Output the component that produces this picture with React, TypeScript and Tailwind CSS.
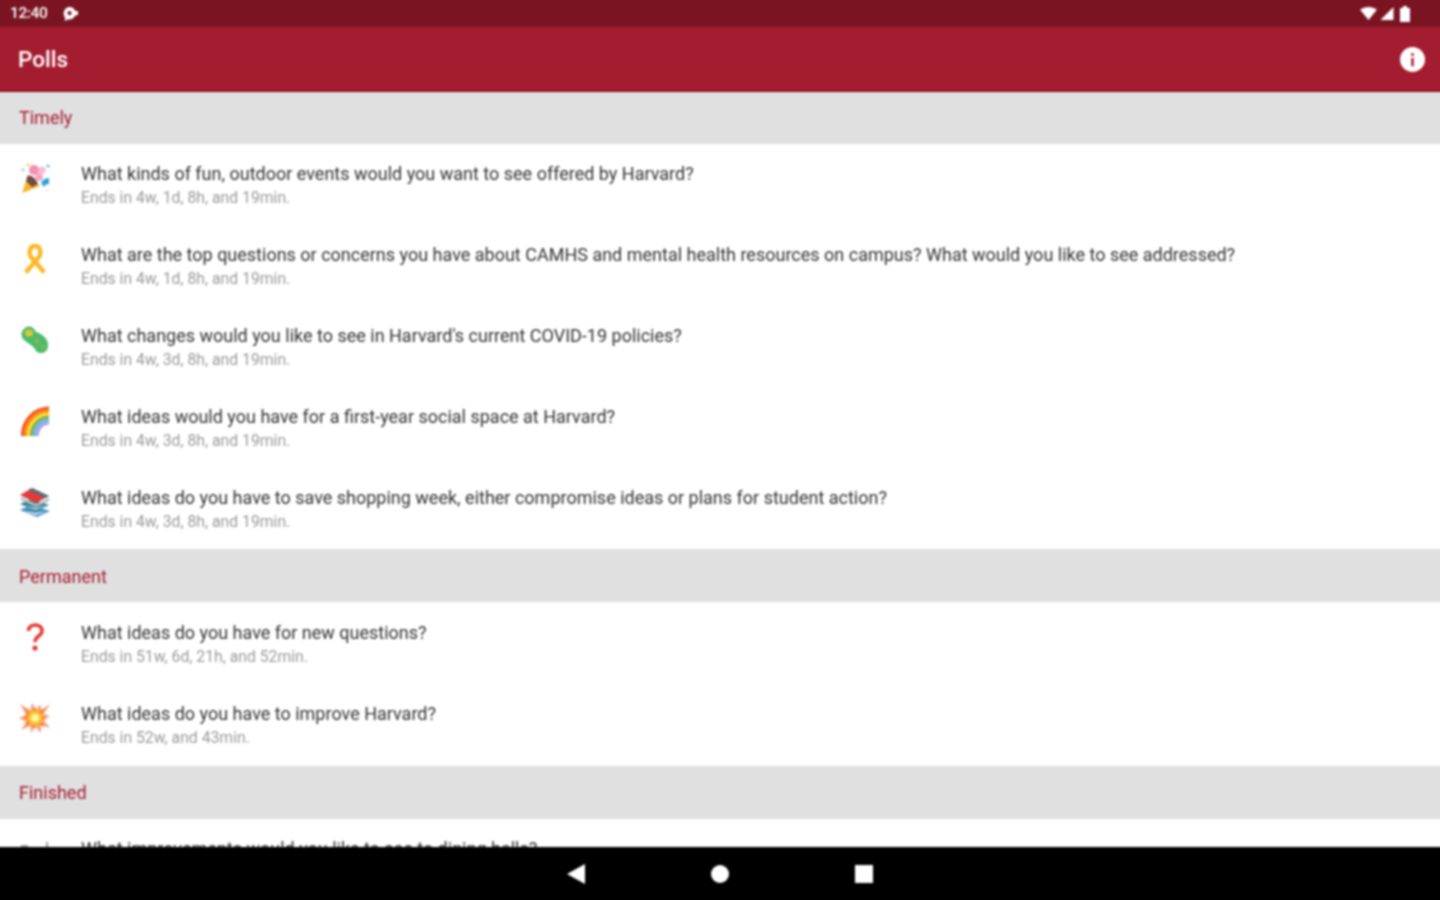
const polls = {
  timely: [
    { icon: "party", title: "What kinds of fun, outdoor events would you want to see offered by Harvard?", ends: "Ends in 4w, 1d, 8h, and 19min." },
    { icon: "ribbon", title: "What are the top questions or concerns you have about CAMHS and mental health resources on campus? What would you like to see addressed?", ends: "Ends in 4w, 1d, 8h, and 19min." },
    { icon: "microbe", title: "What changes would you like to see in Harvard's current COVID-19 policies?", ends: "Ends in 4w, 3d, 8h, and 19min." },
    { icon: "rainbow", title: "What ideas would you have for a first-year social space at Harvard?", ends: "Ends in 4w, 3d, 8h, and 19min." },
    { icon: "books", title: "What ideas do you have to save shopping week, either compromise ideas or plans for student action?", ends: "Ends in 4w, 3d, 8h, and 19min." },
  ],
  permanent: [
    { icon: "question", title: "What ideas do you have for new questions?", ends: "Ends in 51w, 6d, 21h, and 52min." },
    { icon: "boom", title: "What ideas do you have to improve Harvard?", ends: "Ends in 52w, and 43min." },
  ],
};

function PollIcon({ name }: { name: string }) {
  if (name === "party") {
    return (
      <svg viewBox="0 0 32 32" className="h-8 w-8">
        <path d="M3 31 L9 13 L21 24 Z" fill="#fbb02d" />
        <path d="M8.5 14 C12 12 17 17 19 22 L13 25 L7 19 Z" fill="#6d4c41" />
        <circle cx="15" cy="8" r="5" fill="#f48fb1" />
        <circle cx="23" cy="8" r="3.5" fill="#f8bbd0" />
        <circle cx="20" cy="15" r="4" fill="#f8a5c2" />
        <path d="M22 21 q3 -5 8 -5 l0 6 q-4 0 -5 3 Z" fill="#29a3e0" />
        <circle cx="4" cy="8" r="2" fill="#b3e5fc" />
        <circle cx="9" cy="3" r="1.5" fill="#fdd835" />
        <circle cx="29" cy="4" r="1.6" fill="#4fc3f7" />
        <circle cx="28" cy="28" r="1.5" fill="#fce4ec" />
      </svg>
    );
  }
  if (name === "ribbon") {
    return (
      <svg viewBox="0 0 32 32" className="h-8 w-8">
        <path d="M8 28 L20 14 C23 9 21 3 16 3 C11 3 9 9 12 14 L24 28" fill="none" stroke="#fbb829" strokeWidth="4.4" strokeLinecap="round" />
      </svg>
    );
  }
  if (name === "microbe") {
    return (
      <svg viewBox="0 0 32 32" className="h-8 w-8">
        <path d="M6 4 C10 1 15 3 17 8 C22 9 30 15 29 22 C29 29 21 31 17 27 C15 22 10 20 5 16 C1 12 2 7 6 4 Z" fill="#4cbb6c" />
        <ellipse cx="10" cy="9" rx="4" ry="3.5" fill="#e0c53a" />
        <circle cx="18" cy="17" r="3" fill="#7cb85a" />
        <circle cx="24" cy="23" r="2.6" fill="#7cb85a" />
      </svg>
    );
  }
  if (name === "rainbow") {
    return (
      <svg viewBox="0 0 32 32" className="h-8 w-8">
        <g fill="none" strokeWidth="3">
          <path d="M3.5 31 A 27 27 0 0 1 30 3" stroke="#f4511e" />
          <path d="M6.5 31 A 24 24 0 0 1 30 6" stroke="#fb8c00" />
          <path d="M9.5 31 A 21 21 0 0 1 30 9" stroke="#fdd835" />
          <path d="M12.5 31 A 18 18 0 0 1 30 12" stroke="#7cb342" />
          <path d="M15.5 31 A 15 15 0 0 1 30 15" stroke="#64b5f6" />
          <path d="M18.5 31 A 12 12 0 0 1 30 18" stroke="#b39ddb" />
        </g>
      </svg>
    );
  }
  if (name === "books") {
    return (
      <svg viewBox="0 0 32 32" className="h-8 w-8">
        <path d="M1 24 L12 19 L31 25 L18 31 Z" fill="#3f8fc4" />
        <path d="M3 25 L17 29 L28 25 L17 27 Z" fill="#eceff1" />
        <path d="M1 18 L13 13 L30 19 L17 25 Z" fill="#2e7d8c" />
        <path d="M3 19 L17 24 L28 19 L17 22 Z" fill="#cfd8dc" />
        <path d="M2 11 L17 18 L30 12 L30 15 L17 21 L2 14 Z" fill="#b0bec5" />
        <path d="M1 9 L13 2 L30 10 L17 17 Z" fill="#e53935" />
        <path d="M9 4 L13 2 L30 10 L26 12 Z" fill="#546e7a" />
      </svg>
    );
  }
  if (name === "question") {
    return (
      <svg viewBox="0 0 32 32" className="h-8 w-8">
        <path d="M9.5 10 C9.5 2 23 2 23 10 C23 15 16 15 16 21" fill="none" stroke="#e53935" strokeWidth="3.6" />
        <circle cx="16" cy="27" r="2.6" fill="#e53935" />
      </svg>
    );
  }
  if (name === "boom") {
    return (
      <svg viewBox="0 0 32 32" className="h-8 w-8">
        <path d="M1 2 L11 8 L13 1 L17 7 L22 2 L22 8 L31 2 L25 12 L31 14 L25 18 L31 26 L22 23 L22 31 L16 25 L12 31 L11 24 L2 28 L7 20 L0 16 L7 13 Z" fill="#f8a58a" />
        <path d="M5 6 L12 11 L16 5 L18 10 L26 6 L22 13 L27 16 L22 19 L26 25 L18 22 L15 27 L12 22 L6 24 L9 18 L4 15 L9 12 Z" fill="#f9812a" />
        <circle cx="16" cy="16" r="7.5" fill="#fbc02d" />
        <circle cx="16" cy="16" r="4" fill="#fff59d" />
      </svg>
    );
  }
  // dining row: only the top of the icon shows above the nav bar
  return (
    <svg viewBox="0 0 32 32" className="h-8 w-8">
      <path d="M2 9 h7 M28 5 v6" stroke="#9e9e9e" strokeWidth="2" fill="none" />
    </svg>
  );
}

function SectionHeader({ label, className }: { label: string; className: string }) {
  return (
    <div className={`flex items-center bg-[#e0e0e0] pl-[21px] text-[18px] text-[#a41c30] ${className}`}>
      {label}
    </div>
  );
}

function PollRow({ icon, title, ends }: { icon: string; title: string; ends: string }) {
  return (
    <div className="flex h-[81px] pl-[21px] pt-[18px]">
      <div className="w-[62px] shrink-0">
        <PollIcon name={icon} />
      </div>
      <div>
        <div className="h-[23px] whitespace-nowrap text-[18px] leading-[23px] text-[#333333]">{title}</div>
        <div className="whitespace-nowrap text-[15.75px] leading-[26px] text-[#9a9a9a]">{ends}</div>
      </div>
    </div>
  );
}

export default function App() {
  return (
    <div className="h-[900px] w-[1440px] overflow-hidden bg-black">
      {/* the soft look of the screenshot; 2px bleed on each side keeps the edges from fading */}
      <div className="-ml-[2px] -mt-[2px] flex h-[904px] w-[1444px] flex-col overflow-hidden bg-white font-['Roboto',sans-serif] [filter:blur(0.8px)]">
        {/* Status bar */}
        <div className="flex h-[29px] shrink-0 items-center justify-between bg-[#7a1423] pl-[12px] pr-[31px] pt-[2px] text-white">
          <div className="flex items-center gap-[14px]">
            <span className="text-[15.5px] font-medium tracking-[-0.4px]">12:40</span>
            <svg viewBox="0 0 20 18" className="h-[16px] w-[18px]" fill="white">
              <path d="M9 1 a7.5 7.5 0 0 1 7 4.5 h3 v5 h-3 a7.5 7.5 0 0 1 -8 4.5 l-4 2 l0.5 -4 a7.5 7.5 0 0 1 4.5 -12 Z" />
              <circle cx="9.5" cy="8" r="2.4" fill="#7a1423" />
            </svg>
          </div>
          <div className="flex items-center">
            <svg viewBox="0 0 18 14" className="h-[13px] w-[19px]" fill="white">
              <path d="M0 3 C5 -1 13 -1 18 3 L9 14 Z" />
            </svg>
            <svg viewBox="0 0 14 14" className="ml-[2px] h-[13px] w-[14px]" fill="white">
              <path d="M14 0 V14 H0 Z" />
            </svg>
            <svg viewBox="0 0 10 16" className="ml-[5px] h-[16px] w-[12px]" fill="white">
              <path d="M3 0 H7 V2 H10 V16 H0 V2 H3 Z" />
            </svg>
          </div>
        </div>

        {/* App bar */}
        <div className="flex h-[65px] shrink-0 items-center justify-between border-b-[2px] border-[#8f1020] bg-[#a41c30] pl-[20px] pr-[17px] pt-[2px] text-white">
          <span className="text-[22.5px] font-medium">Polls</span>
          <svg viewBox="0 0 24 24" className="h-[25px] w-[25px]">
            <circle cx="12" cy="12" r="12" fill="white" />
            <rect x="10.8" y="10.5" width="2.4" height="8" fill="#a41c30" />
            <rect x="10.8" y="6" width="2.4" height="2.6" fill="#a41c30" />
          </svg>
        </div>

        <div className="min-h-0 flex-1 overflow-hidden">
          <SectionHeader label="Timely" className="h-[52px] pb-[2px]" />
          {polls.timely.map((p) => (
            <PollRow key={p.title} {...p} />
          ))}
          <SectionHeader label="Permanent" className="h-[53px] pt-[2px]" />
          <div className="py-px">
            {polls.permanent.map((p) => (
              <PollRow key={p.title} {...p} />
            ))}
          </div>
          <SectionHeader label="Finished" className="h-[53px]" />
          <PollRow icon="none" title="What improvements would you like to see to dining halls?" ends="" />
        </div>

        {/* Nav bar */}
        <div className="flex h-[55px] shrink-0 items-center justify-center gap-[126px] bg-black pb-[2px]">
          <svg viewBox="0 0 18 20" className="h-[20px] w-[18px]" fill="white">
            <path d="M18 0 V20 L0 10 Z" />
          </svg>
          <div className="h-[18px] w-[18px] rounded-full bg-white" />
          <div className="h-[18px] w-[18px] bg-white" />
        </div>
      </div>
    </div>
  );
}
